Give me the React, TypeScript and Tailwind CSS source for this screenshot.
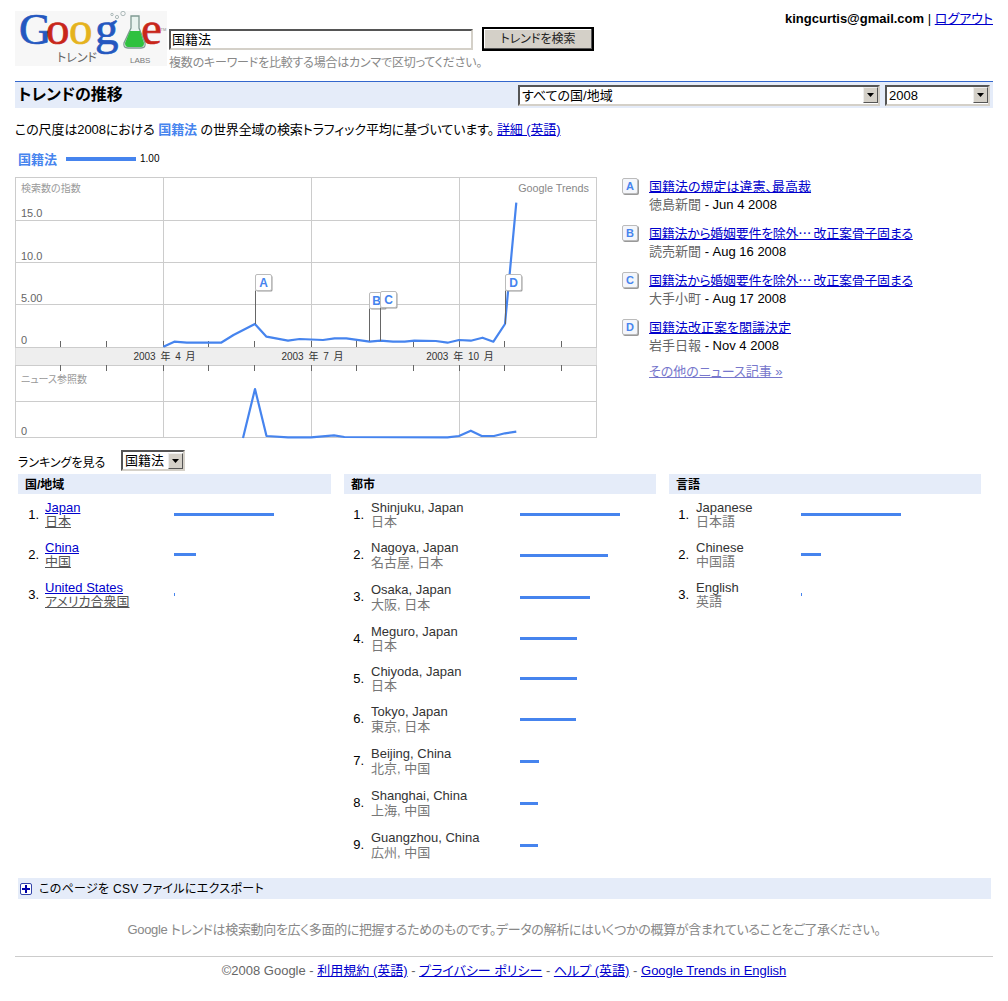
import React from 'react';

const cities = [
  { name: 'Shinjuku', country: 'Japan', local: '日本', width: 100, tall: false },
  { name: 'Nagoya', country: 'Japan', local: '名古屋, 日本', width: 88, tall: true },
  { name: 'Osaka', country: 'Japan', local: '大阪, 日本', width: 70, tall: true },
  { name: 'Meguro', country: 'Japan', local: '日本', width: 57, tall: false },
  { name: 'Chiyoda', country: 'Japan', local: '日本', width: 57, tall: false },
  { name: 'Tokyo', country: 'Japan', local: '東京, 日本', width: 56, tall: true },
  { name: 'Beijing', country: 'China', local: '北京, 中国', width: 19, tall: true },
  { name: 'Shanghai', country: 'China', local: '上海, 中国', width: 18, tall: true },
  { name: 'Guangzhou', country: 'China', local: '広州, 中国', width: 18, tall: true },
];

const countries = [
  { name: 'Japan', local: '日本', width: 100 },
  { name: 'China', local: '中国', width: 22 },
  { name: 'United States', local: 'アメリカ合衆国', width: 1 },
];

const languages = [
  { name: 'Japanese', local: '日本語', width: 100 },
  { name: 'Chinese', local: '中国語', width: 20 },
  { name: 'English', local: '英語', width: 1 },
];

const news = [
  { letter: 'A', title: '国籍法の規定は違憲、最高裁', source: '徳島新聞', date: 'Jun 4 2008', tight: false },
  { letter: 'B', title: '国籍法から婚姻要件を除外… 改正案骨子固まる', source: '読売新聞', date: 'Aug 16 2008', tight: true },
  { letter: 'C', title: '国籍法から婚姻要件を除外… 改正案骨子固まる', source: '大手小町', date: 'Aug 17 2008', tight: true },
  { letter: 'D', title: '国籍法改正案を閣議決定', source: '岩手日報', date: 'Nov 4 2008', tight: false },
];

const searchLine =
  '163.4,346.7 174.3,341.7 186.8,342.7 221,342.7 233.5,335 254.9,324 266.5,336.7 288,340.7 299.6,339 323,340 334.6,338.3 346.3,338.3 369.6,341.7 380.5,340.7 393,341.7 404.7,341.7 414.4,340.7 435.8,341 447.5,342.7 459,340 470.8,340.7 482.5,337.7 493.4,341.7 505,324 516.3,202.7';
const newsLine =
  '243,438 255,389 266.5,436 288,437.3 311,437.3 334,435.3 344.4,437 447.5,437.3 459,436 470.8,430.7 481.7,436 494,436 505,433.3 516.3,431.7';
const ticks = [60.5, 106.5, 163.5, 208.5, 254.5, 311.5, 356.5, 413.5, 459.5, 504.5, 561.5];

function Logo() {
  return (
    <svg width="152" height="55" viewBox="13 11 152 55" className="block shrink-0">
      <rect x="13" y="11" width="152" height="55" fill="#f7f7f7" />
      <text y="44" fontFamily="'Liberation Serif', serif" fontSize="47" strokeWidth="0.7">
        <tspan x="17" fill="#2458c0" stroke="#2458c0" fontSize="45">G</tspan>
        <tspan x="44" fill="#c8261a" stroke="#c8261a">o</tspan>
        <tspan x="67" fill="#e5b31d" stroke="#e5b31d">o</tspan>
        <tspan x="93" fill="#2458c0" stroke="#2458c0">g</tspan>
        <tspan x="139" fill="#c8261a" stroke="#c8261a">e</tspan>
      </text>
      <path d="M129 16h8v12l6 15q1 5-4 5h-13q-5 0-4-5l7-15z" fill="#e8f3ee" stroke="#7f9a92" strokeWidth="1.3" />
      <path d="M128 31h10l4 12q0 4-3 4h-13q-3 0-3-4z" fill="#2fc13f" />
      <circle cx="115" cy="17" r="1.6" fill="none" stroke="#9aa" strokeWidth="0.8" />
      <circle cx="121" cy="13.5" r="2.2" fill="none" stroke="#9aa" strokeWidth="0.8" />
      <circle cx="110" cy="14.5" r="1.2" fill="none" stroke="#9aa" strokeWidth="0.8" />
      <text x="55" y="62" fontSize="12" fill="#666666" fontFamily="'Noto Sans CJK JP', sans-serif">トレンド</text>
      <text x="128" y="63" fontSize="8" fill="#777777" fontFamily="'Liberation Sans', sans-serif">LABS</text>
      <text x="158.5" y="31" fontSize="4" fill="#888888" fontFamily="'Liberation Sans', sans-serif">TM</text>
    </svg>
  );
}

function FakeSelect({ label, className }: { label: string; className: string }) {
  return (
    <div className={`flex h-[21px] items-center justify-between border-2 border-b-[#d4d0c8] border-l-[#555555] border-r-[#d4d0c8] border-t-[#555555] bg-white pl-[2px] leading-none text-black ${className}`}>
      <span>{label}</span>
      <span className="flex h-[16px] w-[15px] items-center justify-center border border-b-[#555555] border-l-[#eeeeee] border-r-[#555555] border-t-[#eeeeee] bg-[#d4d0c8]">
        <svg width="7" height="4" viewBox="0 0 7 4">
          <path d="M0 0h7L3.5 4z" fill="#000000" />
        </svg>
      </span>
    </div>
  );
}

function Flag({ x, y, poleEnd, letter }: { x: number; y: number; poleEnd: number; letter: string }) {
  return (
    <g>
      <line x1={x} y1={y + 16} x2={x} y2={poleEnd} stroke="#666666" strokeWidth="1" />
      <rect x={x + 1} y={y + 1} width="16" height="16" rx="1.5" fill="#999999" />
      <rect x={x} y={y} width="16" height="16" rx="1.5" fill="#ffffff" stroke="#bbbbbb" strokeWidth="1" />
      <text x={x + (letter === 'B' ? 7 : 8)} y={y + 12.5} textAnchor="middle" fontSize="12" fontWeight="bold" fill="#4684ee">{letter}</text>
    </g>
  );
}

function Chart() {
  return (
    <svg width="583" height="262" viewBox="15 177 583 262" className="block shrink-0" fontFamily="'Liberation Sans', 'Noto Sans CJK JP', sans-serif">
      <rect x="15.5" y="177.5" width="581" height="260" fill="#ffffff" stroke="#cccccc" />
      {[220.5, 262.5, 304.5, 401.5].map((y) => (
        <line key={y} x1="15" x2="597" y1={y} y2={y} stroke="#cccccc" />
      ))}
      {[163.5, 311.5, 459.5].map((x) => (
        <line key={x} x1={x} x2={x} y1="177" y2="438" stroke="#cccccc" />
      ))}
      <rect x="15.5" y="347" width="581" height="18" fill="#eeeeee" />
      <line x1="15" x2="597" y1="347.5" y2="347.5" stroke="#cccccc" />
      <line x1="15" x2="597" y1="365.5" y2="365.5" stroke="#cccccc" />
      {ticks.map((x) => (
        <g key={x} stroke="#666666">
          <line x1={x} x2={x} y1="341" y2="347" />
          <line x1={x} x2={x} y1="365" y2="371" />
        </g>
      ))}
      <g fontSize="10" fill="#999999">
        <text x="21" y="192">検索数の指数</text>
        <text x="21" y="383">ニュース参照数</text>
      </g>
      <text x="589" y="192" textAnchor="end" fontSize="10.8" fill="#888888">Google Trends</text>
      <g fontSize="11" fill="#666666">
        <text x="21" y="217">15.0</text>
        <text x="21" y="260">10.0</text>
        <text x="21" y="302">5.00</text>
        <text x="21" y="344">0</text>
        <text x="21" y="435">0</text>
      </g>
      <g fontSize="10" fill="#333333" textAnchor="middle" wordSpacing="2">
        <text x="164.5" y="360">2003 年 4 月</text>
        <text x="312.5" y="360">2003 年 7 月</text>
        <text x="460" y="360">2003 年 10 月</text>
      </g>
      <polyline points={searchLine} fill="none" stroke="#4684ee" strokeWidth="2.2" strokeLinejoin="round" />
      <polyline points={newsLine} fill="none" stroke="#4684ee" strokeWidth="2.2" strokeLinejoin="round" />
      <Flag x={255.5} y={274.5} poleEnd={324} letter="A" />
      <Flag x={369.5} y={292.5} poleEnd={341} letter="B" />
      <Flag x={380.5} y={291.5} poleEnd={341} letter="C" />
      <Flag x={505.5} y={274.5} poleEnd={324} letter="D" />
    </svg>
  );
}

function Bar({ width }: { width: number }) {
  return <div className="h-[3px] bg-[#4684ee]" style={{ width }} />;
}

function SectionHead({ title }: { title: string }) {
  return <div className="flex h-[20px] items-center bg-[#e5ecf9] pl-[7px] pt-[1px] text-[12px] font-bold leading-none text-black">{title}</div>;
}

function LinkedRows() {
  return (
    <div className="mt-[7px]">
      {countries.map((c, i) => (
        <div key={c.name} className="flex h-[40px] items-start">
          <div className="flex h-[26px] w-[21px] shrink-0 items-center justify-end pt-[1px] text-[13px] leading-none">{i + 1}.</div>
          <div className="ml-[6px] w-[129px] shrink-0 text-[13px] leading-[14px]">
            <a href="#" className="block w-fit text-[#0000cc] underline">{c.name}</a>
            <a href="#" className="block w-fit text-[#555555] underline">{c.local}</a>
          </div>
          <div className="flex h-[26px] items-center">
            <Bar width={c.width} />
          </div>
        </div>
      ))}
    </div>
  );
}

function CityRows() {
  return (
    <div className="mt-[7px]">
      {cities.map((c, i) => (
        <div key={c.name} className={c.tall ? 'flex h-[42px] items-start leading-[15px]' : 'flex h-[40px] items-start leading-[14px]'}>
          <div className="flex h-[26px] w-[20px] shrink-0 items-center justify-end pt-[1px] text-[13px] leading-none">{i + 1}.</div>
          <div className={c.tall ? 'ml-[7px] mt-[-1px] w-[149px] shrink-0 text-[13px]' : 'ml-[7px] w-[149px] shrink-0 text-[13px]'}>
            <div className="text-[#333333]">{c.name}, {c.country}</div>
            <div className="text-[#777777]">{c.local}</div>
          </div>
          <div className={c.tall ? 'flex h-[29px] items-center' : 'flex h-[27px] items-center'}>
            <Bar width={c.width} />
          </div>
        </div>
      ))}
    </div>
  );
}

function LanguageRows() {
  return (
    <div className="mt-[7px]">
      {languages.map((l, i) => (
        <div key={l.name} className="flex h-[40px] items-start">
          <div className="flex h-[26px] w-[20px] shrink-0 items-center justify-end pt-[1px] text-[13px] leading-none">{i + 1}.</div>
          <div className="ml-[7px] w-[105px] shrink-0 text-[13px] leading-[14px]">
            <div className="text-[#333333]">{l.name}</div>
            <div className="text-[#777777]">{l.local}</div>
          </div>
          <div className="flex h-[26px] items-center">
            <Bar width={l.width} />
          </div>
        </div>
      ))}
    </div>
  );
}

export default function App() {
  return (
    <div className="h-[1001px] w-[1008px] overflow-hidden bg-white pl-[15px] pr-[15px] pt-[11px] text-[13px] text-black [font-family:'Liberation_Sans','Noto_Sans_CJK_JP',sans-serif] [font-feature-settings:'palt']">
      {/* Header */}
      <div className="flex h-[55px] items-start">
        <Logo />
        <div className="ml-[2px] w-[430px] pt-[16px]">
          <div className="flex items-center">
            <div className="h-[21px] w-[304px] border-2 border-b-[#d4d0c8] border-l-[#555555] border-r-[#d4d0c8] border-t-[#555555] bg-white pl-[1px] text-[13px] leading-[17px]">国籍法</div>
            <button className="ml-[9px] h-[24px] w-[112px] border-2 border-black bg-[#d4d0c8] text-[12px] leading-none text-[#222222] shadow-[inset_-1px_-1px_0_#555555,inset_1px_1px_0_#ffffff]">トレンドを検索</button>
          </div>
          <div className="mt-[5px] whitespace-nowrap text-[12px] leading-[14px] tracking-[-0.2px] text-[#888888]">複数のキーワードを比較する場合はカンマで区切ってください。</div>
        </div>
        <div className="ml-auto text-[13px] leading-[15px]">
          <b>kingcurtis@gmail.com</b> | <a href="#" className="text-[#0000cc] underline">ログアウト</a>
        </div>
      </div>

      {/* Title bar */}
      <div className="mt-[15px] flex h-[27px] items-center justify-between border-t border-t-[#3366cc] bg-[#e5ecf9] pl-[3px] pr-[3px]">
        <h1 className="text-[16px] font-bold leading-none">トレンドの推移</h1>
        <div className="flex gap-[5px]">
          <FakeSelect label="すべての国/地域" className="w-[362px] text-[13px]" />
          <FakeSelect label="2008" className="w-[105px] text-[13px]" />
        </div>
      </div>

      <p className="mt-[14px] text-[13px] leading-[16px] tracking-[-0.1px]">
        この尺度は2008における <b className="text-[#4684ee]">国籍法</b> の世界全域の検索トラフィック平均に基づいています。
        <a href="#" className="ml-[3px] text-[#0000cc] underline">詳細 (英語)</a>
      </p>

      <div className="mt-[13px] flex h-[16px] items-center pl-[3px]">
        <b className="text-[13px] leading-none text-[#4684ee]">国籍法</b>
        <div className="ml-[9px] h-[4px] w-[70px] bg-[#4684ee]" />
        <span className="ml-[4px] text-[10px] leading-none">1.00</span>
      </div>

      {/* Chart and news */}
      <div className="mt-[10px] flex items-start">
        <Chart />
        <div className="ml-[24px]">
          {news.map((n) => (
            <div key={n.letter} className="flex h-[47px] items-start">
              <span className="mt-[1px] flex h-[16px] w-[16px] items-center justify-center rounded-[2px] border border-[#bbbbbb] bg-[#f4f6fb] text-[11px] font-bold leading-none text-[#4684ee] shadow-[1px_1px_0_#999999]">{n.letter}</span>
              <div className="ml-[11px] text-[13px] leading-[18px]">
                <a href="#" className={n.tight ? "block tracking-[-0.3px] text-[#0000cc] underline [font-family:'Noto_Sans_CJK_JP',sans-serif]" : "block text-[#0000cc] underline [font-family:'Noto_Sans_CJK_JP',sans-serif]"}>{n.title}</a>
                <div className="mt-[1px]"><span className="text-[#666666]">{n.source}</span> - {n.date}</div>
              </div>
            </div>
          ))}
          <a href="#" className="ml-[27px] mt-[-1px] block text-[13px] leading-[16px] text-[#7777cc] underline">その他のニュース記事 »</a>
        </div>
      </div>

      {/* Rankings */}
      <div className="ml-[3px] mt-[11px] flex h-[21px] items-center">
        <span className="w-[103px] whitespace-nowrap pt-[4px] text-[12px] leading-none">ランキングを見る</span>
        <FakeSelect label="国籍法" className="w-[64px] text-[13px]" />
      </div>
      <div className="ml-[3px] mt-[3px] grid h-[384px] w-[963px] grid-cols-[313px_312px_312px] gap-x-[13px]">
        <div>
          <SectionHead title="国/地域" />
          <LinkedRows />
        </div>
        <div>
          <SectionHead title="都市" />
          <CityRows />
        </div>
        <div>
          <SectionHead title="言語" />
          <LanguageRows />
        </div>
      </div>

      {/* Export */}
      <div className="ml-[3px] mt-[20px] flex h-[21px] w-[973px] items-center bg-[#e5ecf9] pl-[2px] text-[12px] leading-none">
        <span className="flex h-[12px] w-[12px] items-center justify-center rounded-[2px] border border-[#3344aa] bg-white">
          <svg width="8" height="8" viewBox="0 0 8 8">
            <path d="M3 0h2v3h3v2H5v3H3V5H0V3h3z" fill="#0000aa" />
          </svg>
        </span>
        <span className="ml-[7px] pt-[1px] tracking-[0.3px]">このページを CSV ファイルにエクスポート</span>
      </div>

      {/* Footer */}
      <p className="mt-[23px] text-center text-[13px] leading-[16px] tracking-[-0.34px] text-[#888888]">Google トレンドは検索動向を広く多面的に把握するためのものです。データの解析にはいくつかの概算が含まれていることをご了承ください。</p>
      <div className="mt-[18px] border-t border-t-[#cccccc] pt-[6px] text-center text-[13px] leading-[16px] text-[#666666]">
        ©2008 Google - <a href="#" className="text-[#0000cc] underline">利用規約 (英語)</a> - <a href="#" className="text-[#0000cc] underline">プライバシー ポリシー</a> - <a href="#" className="text-[#0000cc] underline">ヘルプ (英語)</a> - <a href="#" className="text-[#0000cc] underline">Google Trends in English</a>
      </div>
    </div>
  );
}
